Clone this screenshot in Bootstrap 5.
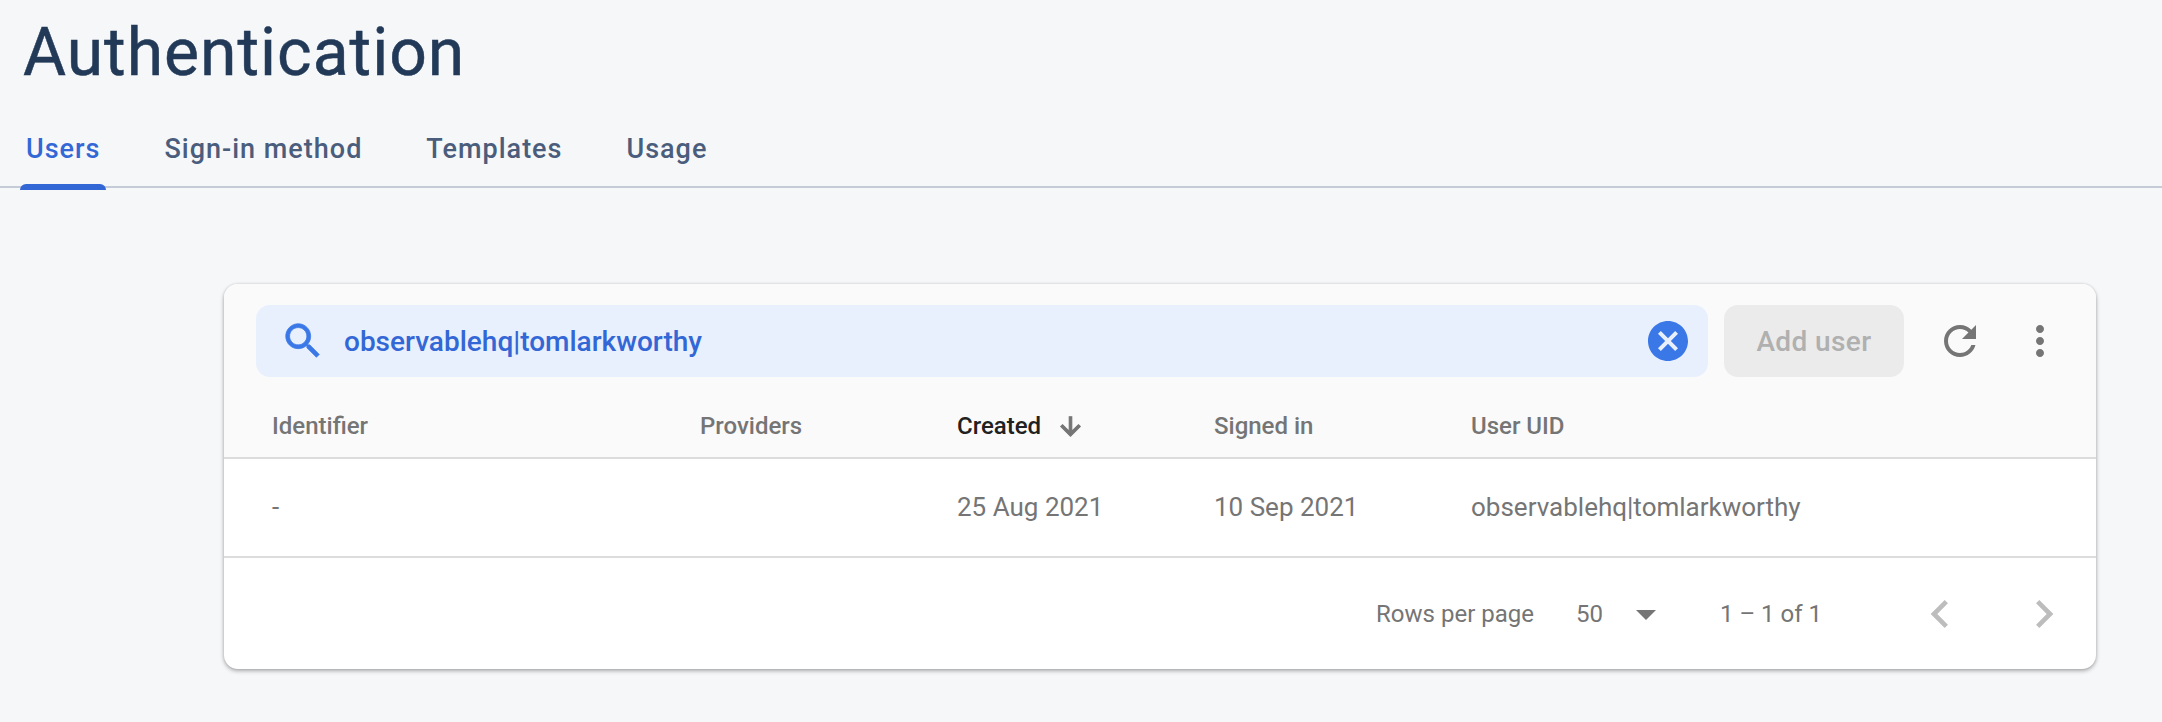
<!DOCTYPE html>
<html lang="en">
<head>
    <meta charset="UTF-8">
    <title>Authentication</title>
    <meta name="viewport" content="width=device-width, initial-scale=1">
    <link href="https://cdn.jsdelivr.net/npm/bootstrap@5.3.3/dist/css/bootstrap.min.css" rel="stylesheet">
    <style>
        html, body { height: 100%; }
        body { background: #f6f7f9; font-family: Roboto, "Liberation Sans", sans-serif; overflow: hidden; }
        .page-title { font-family: Roboto, "Liberation Sans", sans-serif; font-size: 66px; line-height: 76px; font-weight: 400; letter-spacing: 1px; color: #223a58; margin: 15px 0 20px 23px; -webkit-text-stroke: .5px #223a58; }
        .tab-strip { border-bottom: 2px solid #c5ccd8; padding-left: 20px; gap: 52px; height: 77px; flex-wrap: nowrap; }
        .tab-link { position: relative; height: 77px; padding: 0 6px; display: flex; align-items: center; font-size: 27px; font-weight: 500; color: #4b5d7c; letter-spacing: 1px; text-decoration: none; }
        .tab-link.active { color: #3367d6; }
        .tab-link.active::after { content: ""; position: absolute; left: 0; right: 0; bottom: -2px; height: 6px; background: #3367d6; border-radius: 6px 6px 0 0; }
        .user-card { margin: 96px 66px 0 224px; border: 0; border-radius: 14px; background: #fff; box-shadow: 0 2px 4px rgba(0,0,0,.3), 0 0 3px rgba(0,0,0,.12); overflow: hidden; }
        .tool-row { background: #fafafa; padding: 21px 32px 0; height: 93px; gap: 16px; }
        .search-box { background: #e8f0fd; border-radius: 14px; height: 72px; padding: 0 16px 0 24px; }
        .search-icon { stroke: #3b78e7; stroke-width: .4; }
        .search-text { color: #3367d6; font-size: 28px; font-weight: 500; margin-left: 18px; padding-top: 2px; }
        .add-btn { width: 180px; height: 72px; border: 0; border-radius: 14px; background: #ebebeb; color: #b0b0b0; font-size: 28px; font-weight: 500; letter-spacing: .4px; padding-top: 8px; }
        .add-btn:disabled { background: #ebebeb; color: #b0b0b0; opacity: 1; }
        .tool-icons { gap: 32px; margin-left: 16px; }
        .tool-icons svg { fill: #757575; display: block; }
        .user-table { table-layout: fixed; margin: 0; font-size: 26px; color: #757575; }
        .user-table th { background: #fafafa; height: 81px; padding: 18px 0 0; font-size: 24px; font-weight: 500; color: #757575; border-bottom: 2px solid #dcdcdc; vertical-align: middle; }
        .user-table td { height: 99px; padding: 0; color: #757575; font-size: 26px; border-bottom: 2px solid #dcdcdc; vertical-align: middle; }
        .user-table th:first-child, .user-table td:first-child { padding-left: 48px; }
        .col-id { width: 476px; }
        .col-prov { width: 257px; }
        .col-date { width: 257px; }
        .sort-col { color: #212121 !important; }
        .sort-col svg { fill: #757575; stroke: #757575; stroke-width: 1; margin-left: 15px; vertical-align: -7px; }
        .foot-row { height: 111px; padding-right: 24px; font-size: 24px; color: #757575; }
        .foot-row svg { display: block; }
        .foot-arrow { fill: #757575; margin-left: 19px; margin-right: 50px; }
        .foot-size { margin-left: 42px; }
        .foot-range { margin-right: 90px; }
        .foot-nav { fill: #bdbdbd; }
        .foot-next { margin-left: 48px; }
    </style>
</head>
<body>
    <h1 class="page-title">Authentication</h1>
    <nav class="nav tab-strip">
        <a class="tab-link active" href="#">Users</a>
        <a class="tab-link" href="#">Sign-in method</a>
        <a class="tab-link" href="#">Templates</a>
        <a class="tab-link" href="#">Usage</a>
    </nav>
    <div class="card user-card">
        <div class="d-flex tool-row">
            <div class="d-flex align-items-center flex-grow-1 search-box">
                <svg class="search-icon" width="46" height="46" viewBox="0 0 24 24" fill="#3b78e7"><path d="M15.5 14h-.79l-.28-.27C15.41 12.59 16 11.11 16 9.5 16 5.91 13.09 3 9.5 3S3 5.91 3 9.5 5.91 16 9.5 16c1.61 0 3.09-.59 4.23-1.57l.27.28v.79l5 4.99L20.49 19l-4.99-5zm-6 0C7.01 14 5 11.99 5 9.5S7.01 5 9.5 5 14 7.01 14 9.5 11.99 14 9.5 14z"/></svg>
                <span class="search-text flex-grow-1">observablehq|tomlarkworthy</span>
                <svg width="48" height="48" viewBox="0 0 24 24" fill="#3b78e7"><path d="M12 2C6.47 2 2 6.47 2 12s4.47 10 10 10 10-4.47 10-10S17.53 2 12 2zm5 13.59L15.59 17 12 13.41 8.41 17 7 15.59 10.59 12 7 8.41 8.41 7 12 10.59 15.59 7 17 8.41 13.41 12 17 15.59z"/></svg>
            </div>
            <button class="btn add-btn" disabled>Add user</button>
            <div class="d-flex align-items-center tool-icons">
                <svg width="48" height="48" viewBox="0 0 24 24"><path d="M17.65 6.35C16.2 4.9 14.21 4 12 4c-4.42 0-7.99 3.58-7.99 8s3.57 8 7.99 8c3.73 0 6.84-2.55 7.73-6h-2.08c-.82 2.33-3.04 4-5.65 4-3.31 0-6-2.69-6-6s2.69-6 6-6c1.66 0 3.14.69 4.22 1.78L13 11h7V4l-2.35 2.35z"/></svg>
                <svg width="48" height="48" viewBox="0 0 24 24"><path d="M12 8c1.1 0 2-.9 2-2s-.9-2-2-2-2 .9-2 2 .9 2 2 2zm0 2c-1.1 0-2 .9-2 2s.9 2 2 2 2-.9 2-2-.9-2-2-2zm0 6c-1.1 0-2 .9-2 2s.9 2 2 2 2-.9 2-2-.9-2-2-2z"/></svg>
            </div>
        </div>
        <table class="table user-table">
            <thead>
                <tr>
                    <th class="col-id">Identifier</th>
                    <th class="col-prov">Providers</th>
                    <th class="col-date sort-col">Created<svg width="29" height="29" viewBox="0 0 24 24"><path d="M20 12l-1.41-1.41L13 16.17V4h-2v12.17l-5.58-5.59L4 12l8 8 8-8z"/></svg></th>
                    <th class="col-date">Signed in</th>
                    <th>User UID</th>
                </tr>
            </thead>
            <tbody>
                <tr>
                    <td>-</td>
                    <td></td>
                    <td>25 Aug 2021</td>
                    <td>10 Sep 2021</td>
                    <td>observablehq|tomlarkworthy</td>
                </tr>
            </tbody>
        </table>
        <div class="d-flex align-items-center justify-content-end foot-row">
            <span>Rows per page</span>
            <span class="foot-size">50</span>
            <svg class="foot-arrow" width="48" height="48" viewBox="0 0 24 24"><path d="M7 10l5 5 5-5z"/></svg>
            <span class="foot-range">1 – 1 of 1</span>
            <svg class="foot-nav" width="56" height="56" viewBox="0 0 24 24"><path d="M15.41 7.41L14 6l-6 6 6 6 1.41-1.41L10.83 12z"/></svg>
            <svg class="foot-nav foot-next" width="56" height="56" viewBox="0 0 24 24"><path d="M10 6L8.59 7.41 13.17 12l-4.58 4.59L10 18l6-6z"/></svg>
        </div>
    </div>
    <script src="https://cdn.jsdelivr.net/npm/bootstrap@5.3.3/dist/js/bootstrap.bundle.min.js"></script>
</body>
</html>
